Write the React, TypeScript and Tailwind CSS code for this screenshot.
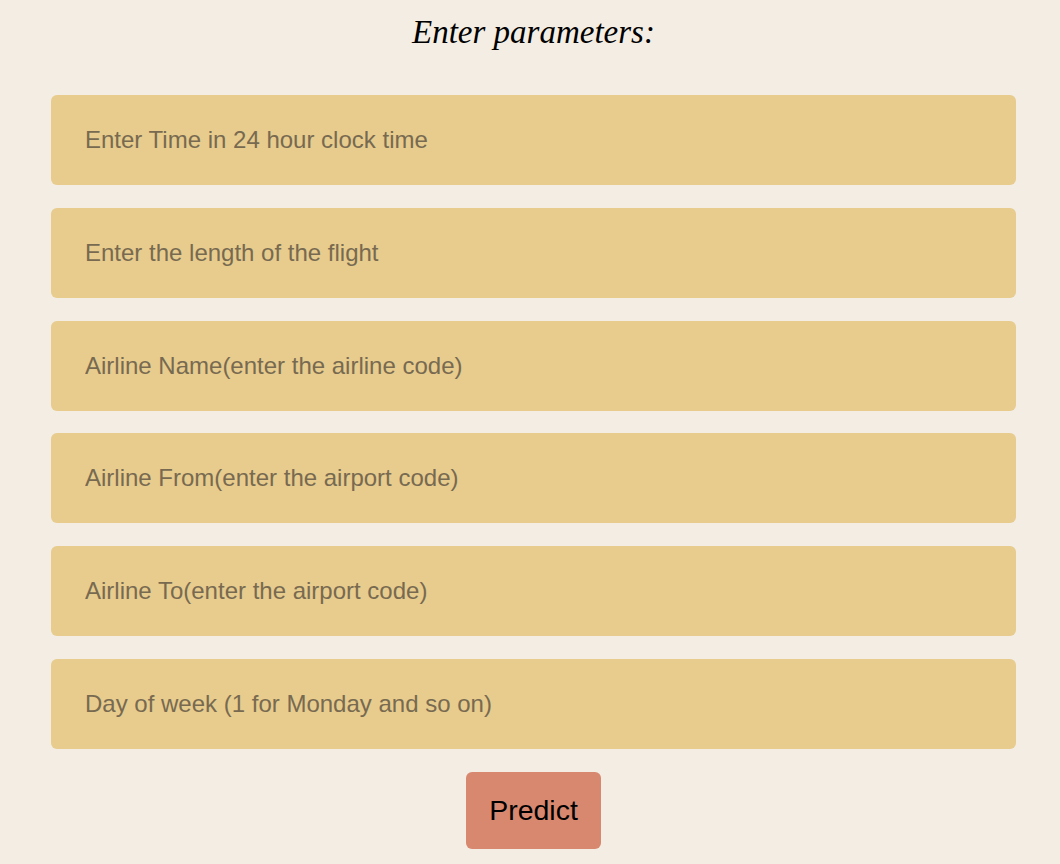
export default function App() {
  const fields = [
    "Enter Time in 24 hour clock time",
    "Enter the length of the flight",
    "Airline Name(enter the airline code)",
    "Airline From(enter the airport code)",
    "Airline To(enter the airport code)",
    "Day of week (1 for Monday and so on)",
  ];

  return (
    <div className="min-h-[864px] w-full bg-[#f3ede3] font-['Liberation_Sans',Arial,sans-serif]">
      <div className="ml-[51px] w-[965px] flex flex-col items-center">
        <h1 className="mt-[12px] h-[40px] text-[33px] leading-[40px] italic text-black font-['Liberation_Serif',serif]">
          Enter parameters:
        </h1>
        <div className="mt-[43px] w-full flex flex-col gap-[22.8px]">
          {fields.map((f) => (
            <input
              key={f}
              type="text"
              placeholder={f}
              className="w-full h-[90px] rounded-[6px] bg-[#e7cc8e] pl-[34px] pr-4 text-[24px] text-black placeholder:text-[#786a50] outline-none"
            />
          ))}
        </div>
        <button className="mt-[23px] w-[135px] h-[77px] rounded-[6px] bg-[#d98870] text-[28.5px] text-black">
          Predict
        </button>
      </div>
    </div>
  );
}
